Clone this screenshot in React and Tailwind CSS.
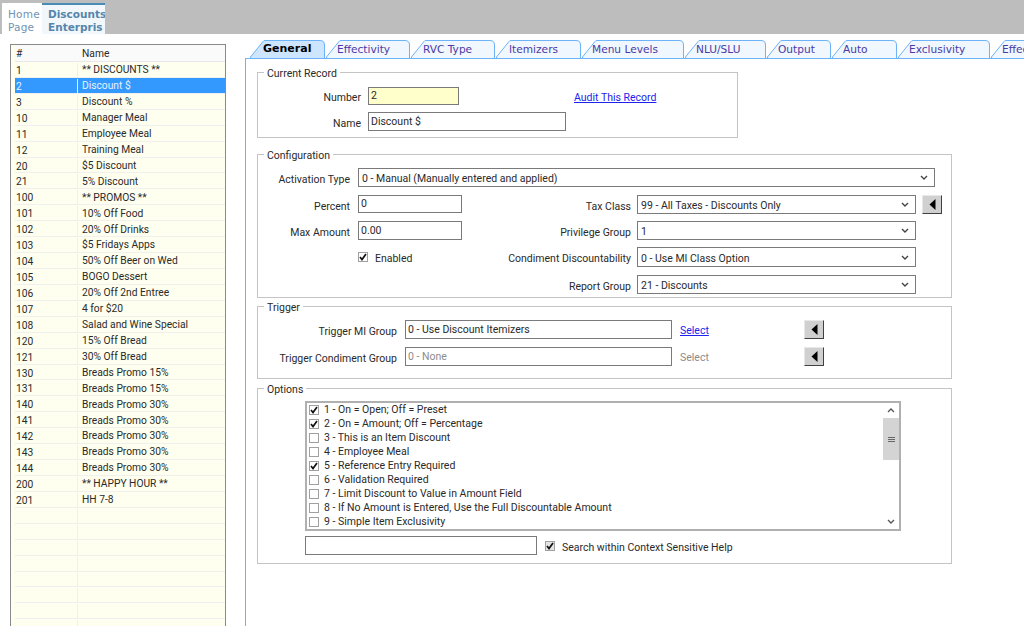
import { Fragment } from 'react'

const rows = [
    ['1', '** DISCOUNTS **'], ['2', 'Discount $'], ['3', 'Discount %'], ['10', 'Manager Meal'],
    ['11', 'Employee Meal'], ['12', 'Training Meal'], ['20', '$5 Discount'], ['21', '5% Discount'],
    ['100', '** PROMOS **'], ['101', '10% Off Food'], ['102', '20% Off Drinks'], ['103', '$5 Fridays Apps'],
    ['104', '50% Off Beer on Wed'], ['105', 'BOGO Dessert'], ['106', '20% Off 2nd Entree'], ['107', '4 for $20'],
    ['108', 'Salad and Wine Special'], ['120', '15% Off Bread'], ['121', '30% Off Bread'], ['130', 'Breads Promo 15%'],
    ['131', 'Breads Promo 15%'], ['140', 'Breads Promo 30%'], ['141', 'Breads Promo 30%'], ['142', 'Breads Promo 30%'],
    ['143', 'Breads Promo 30%'], ['144', 'Breads Promo 30%'], ['200', '** HAPPY HOUR **'], ['201', 'HH 7-8'],
    ['', ''], ['', ''], ['', ''], ['', ''], ['', ''], ['', ''], ['', ''], ['', ''],
]

const tabs = [
    ['General', 76, 'pl-[13px]'], ['Effectivity', 85, 'pl-[11px]'], ['RVC Type', 85, 'pl-[12px]'],
    ['Itemizers', 86, 'pl-[13px]'], ['Menu Levels', 103, 'pl-[10px]'], ['NLU/SLU', 82, 'pl-[11px]'],
    ['Output', 65, 'pl-[11px]'], ['Auto', 66, 'pl-[11px]'], ['Exclusivity', 93, 'pl-[11px]'], ['Effectivity', 90, 'pl-[11px]'],
]

const options = [
    ['1 - On = Open; Off = Preset', true], ['2 - On = Amount; Off = Percentage', true],
    ['3 - This is an Item Discount', false], ['4 - Employee Meal', false],
    ['5 - Reference Entry Required', true], ['6 - Validation Required', false],
    ['7 - Limit Discount to Value in Amount Field', false],
    ['8 - If No Amount is Entered, Use the Full Discountable Amount', false],
    ['9 - Simple Item Exclusivity', false],
]

const Tab = ({ label, width, pad, active }) => (
    <div className={`relative h-[19px] shrink-0 ${active ? 'z-10' : ''}`} style={{ width }}>
        <svg className="absolute left-0 top-0" width={width} height="19">
            <path
                d={`M0.5 19 L0.5 17 L13 1.5 Q13.5 0.5 15 0.5 L${width - 6} 0.5 Q${width - 1.5} 0.5 ${width - 1.5} 5 L${width - 1.5} 19`}
                fill={active ? '#cde5ff' : '#f0f7ff'}
                stroke="#6db3f8"
            />
        </svg>
        <span className={`relative flex h-full items-center font-['DejaVu_Sans',sans-serif] ${pad} ${active ? 'text-[11px] font-bold text-black' : 'text-[10.6px] text-[#4a3aa5]'}`}>
            {label}
        </span>
    </div>
)

const Group = ({ title, className, children }) => (
    <div className={`relative border border-[#c4c4c4] ${className}`}>
        <span className="absolute -top-[6px] left-[6px] bg-white px-[3px] leading-[13px]">{title}</span>
        {children}
    </div>
)

const Input = ({ className, value, disabled }) => (
    <div className={`flex items-center border border-[#7a7a7a] pl-[2px] ${disabled ? 'text-[#8c8c8c]' : ''} ${className}`}>{value}</div>
)

const Select = ({ className, value }) => (
    <div className={`flex items-center justify-between border border-[#7a7a7a] bg-white pl-[3px] pr-[6px] ${className}`}>
        <span className="pt-[3px]">{value}</span>
        <svg width="8" height="5" viewBox="0 0 8 5"><path d="M1 1 L4 4 L7 1" fill="none" stroke="#444" strokeWidth="1.4" /></svg>
    </div>
)

const Arrow = ({ className }) => (
    <div className={`flex h-[19px] w-[20px] items-center justify-center border border-t-[#e8e8e8] border-l-[#e8e8e8] border-r-[#404040] border-b-[#404040] bg-[#d0d0d0] ${className}`}>
        <svg width="7" height="11" viewBox="0 0 7 11"><path d="M6.5 0 L6.5 11 L0.5 5.5 Z" fill="#000" /></svg>
    </div>
)

const Check = ({ checked, className }) => (
    <span className={`flex h-[10px] w-[10px] shrink-0 items-center justify-center border border-[#a0a0a0] ${className}`}>
        {checked && <svg width="8" height="8" viewBox="0 0 8 8"><path d="M1 4 L3 6.5 L7 1" fill="none" stroke="#111" strokeWidth="1.7" /></svg>}
    </span>
)

const Label = ({ className, children }) => (
    <span className={`shrink-0 pt-[4px] text-right ${className}`}>{children}</span>
)

const ConfigRow = ({ left, label, value, arrow, className }) => (
    <div className={`flex items-center ${className}`}>
        <div className="flex h-full w-[204px] items-center">{left}</div>
        <Label className="w-[169px]">{label}</Label>
        <Select className="ml-[6px] h-full w-[279px]" value={value} />
        {arrow && <Arrow className="ml-[6px]" />}
    </div>
)

export default function App() {
    return (
        <div className="flex h-[626px] w-[1024px] flex-col overflow-hidden bg-white font-['Roboto',Arial,sans-serif] text-[10.5px] text-[#2a2a2a]">
            <div className="flex h-[34px] shrink-0 items-end bg-[#bdbdbd] pl-[2px] font-['DejaVu_Sans',sans-serif] text-[10.5px] leading-[13px]">
                <div className="h-[31px] w-[40px] bg-white pl-[6px] pt-[5px] tracking-[0.2px] text-[#6f94b5]">Home<br />Page</div>
                <div className="h-[31px] w-[63px] overflow-hidden whitespace-nowrap border-t-2 border-[#4a8ab5] bg-[#f2f7fb] pl-[6px] pt-[3px] font-bold text-[#5585ad]">Discounts<br />Enterpris</div>
            </div>

            <div className="flex min-h-0 flex-1">
                <div className="ml-[10px] mt-[10px] h-[600px] w-[216px] shrink-0 border border-[#8a8a8a] bg-[#ffffef] pl-[4px] text-[10.25px]">
                    <div className="flex h-[17px] items-center border-b border-[#e8e8e8] bg-[#fafafa] pt-[2px]">
                        <span className="w-[63px] pl-[1px]">#</span>
                        <span className="pl-[4px]">Name</span>
                    </div>
                    {rows.map(([num, name], i) => (
                        <div key={i} className={`flex h-[15.93px] items-center border-b border-[#f0f0ee] pt-px ${num === '2' ? 'bg-[#3399ff] text-[#e8f2ff]' : ''}`}>
                            <span className="h-full w-[63px] border-r border-[#f0f0ee] pl-[1px] leading-[15px]">{num}</span>
                            <span className="pl-[4px]">{name}</span>
                        </div>
                    ))}
                </div>

                <div className="ml-[19px] flex min-w-0 flex-1 flex-col">
                    <div className="mt-[6px] flex h-[19px] shrink-0 overflow-hidden border-b border-[#6db3f8] pl-[5px]">
                        {tabs.map(([label, width, pad], i) => (
                            <Tab key={i} label={label} width={width} pad={pad} active={i === 0} />
                        ))}
                    </div>
                    <div className="flex-1 border-l border-[#6db3f8] pl-[11px] pt-[13px]">
                        <Group title="Current Record" className="h-[66px] w-[481px] pt-[14px]">
                            <div className="flex h-[18px] items-center">
                                <Label className="w-[103px]">Number</Label>
                                <Input className="ml-[7px] h-full w-[91px] bg-[#ffffcc]" value="2" />
                                <a className="ml-[115px] pt-[3px] text-[#2222ee] underline">Audit This Record</a>
                            </div>
                            <div className="mt-[7px] flex h-[19px] items-center">
                                <Label className="w-[103px]">Name</Label>
                                <Input className="ml-[7px] h-full w-[198px]" value="Discount $" />
                            </div>
                        </Group>

                        <Group title="Configuration" className="mt-[16px] h-[144px] w-[695px] pt-[13px]">
                            <div className="flex h-[19px] items-center">
                                <Label className="w-[92px]">Activation Type</Label>
                                <Select className="ml-[8px] h-full w-[577px]" value="0 - Manual (Manually entered and applied)" />
                            </div>
                            <ConfigRow
                                className="mt-[8px] h-[19px]"
                                left={<Fragment><Label className="w-[92px]">Percent</Label><Input className="ml-[8px] h-[18px] w-[104px] self-start" value="0" /></Fragment>}
                                label="Tax Class" value="99 - All Taxes - Discounts Only" arrow
                            />
                            <ConfigRow
                                className="mt-[7px] h-[19px]"
                                left={<Fragment><Label className="w-[92px]">Max Amount</Label><Input className="ml-[8px] h-[19px] w-[104px]" value="0.00" /></Fragment>}
                                label="Privilege Group" value="1"
                            />
                            <ConfigRow
                                className="mt-[7px] h-[20px]"
                                left={<Fragment><Check checked className="ml-[100px]" /><span className="ml-[7px] pt-[3px]">Enabled</span></Fragment>}
                                label="Condiment Discountability" value="0 - Use MI Class Option"
                            />
                            <ConfigRow className="mt-[8px] h-[19px]" left={null} label="Report Group" value="21 - Discounts" />
                        </Group>

                        <Group title="Trigger" className="mt-[8px] h-[73px] w-[695px] pt-[13px]">
                            <div className="flex h-[19px] items-center">
                                <Label className="w-[139px]">Trigger MI Group</Label>
                                <Input className="ml-[8px] h-full w-[267px]" value="0 - Use Discount Itemizers" />
                                <a className="ml-[8px] w-[124px] pt-[3px] text-[#2222ee] underline">Select</a>
                                <Arrow />
                            </div>
                            <div className="mt-[8px] flex h-[19px] items-center">
                                <Label className="w-[139px]">Trigger Condiment Group</Label>
                                <Input className="ml-[8px] h-full w-[267px]" value="0 - None" disabled />
                                <span className="ml-[8px] w-[124px] pt-[3px] text-[#8c8c8c]">Select</span>
                                <Arrow />
                            </div>
                        </Group>

                        <Group title="Options" className="mt-[9px] h-[176px] w-[695px] pl-[47px] pt-[12px]">
                            <div className="flex h-[130px] w-[596px] border-2 border-[#b0b0b0] pl-[2px]">
                                <div className="min-w-0 flex-1">
                                    {options.map(([label, checked]) => (
                                        <div key={label} className="flex h-[14px] items-center">
                                            <Check checked={checked} />
                                            <span className="ml-[5px]">{label}</span>
                                        </div>
                                    ))}
                                </div>
                                <div className="flex w-[16px] shrink-0 flex-col items-center bg-white">
                                    <div className="flex h-[15px] items-center">
                                        <svg width="8" height="5" viewBox="0 0 8 5"><path d="M1 4 L4 1 L7 4" fill="none" stroke="#555" strokeWidth="1.3" /></svg>
                                    </div>
                                    <div className="flex h-[42px] w-full flex-col items-center justify-center gap-[1px] bg-[#d4d4d4]">
                                        <span className="h-px w-[7px] bg-[#666]" />
                                        <span className="h-px w-[7px] bg-[#666]" />
                                        <span className="h-px w-[7px] bg-[#666]" />
                                    </div>
                                    <div className="flex-1" />
                                    <div className="flex h-[15px] items-center">
                                        <svg width="8" height="5" viewBox="0 0 8 5"><path d="M1 1 L4 4 L7 1" fill="none" stroke="#555" strokeWidth="1.3" /></svg>
                                    </div>
                                </div>
                            </div>
                            <div className="mt-[5px] flex h-[19px] items-center">
                                <Input className="h-full w-[232px]" value="" />
                                <Check checked className="ml-[8px] border-[#777] bg-[#e4e4e4]" />
                                <span className="ml-[7px] pt-[4px]">Search within Context Sensitive Help</span>
                            </div>
                        </Group>
                    </div>
                </div>
            </div>
        </div>
    )
}
